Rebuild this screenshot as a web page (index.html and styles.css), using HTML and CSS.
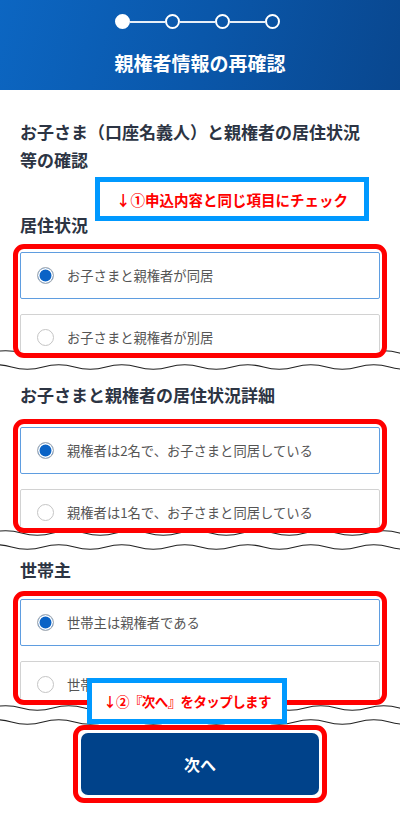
FILE: index.html
```html
<!DOCTYPE html>
<html lang="ja">
<head>
    <meta charset="UTF-8">
    <meta name="viewport" content="width=device-width, initial-scale=1.0">
    <title>親権者情報の再確認</title>
    <link rel="stylesheet" href="styles.css">
</head>
<body>
    <header class="head">
        <ol class="steps">
            <li class="step is-current"></li>
            <li class="step-line"></li>
            <li class="step"></li>
            <li class="step-line"></li>
            <li class="step"></li>
            <li class="step-line"></li>
            <li class="step"></li>
        </ol>
        <h1 class="head-title">親権者情報の再確認</h1>
    </header>

    <main class="content">
        <h2 class="lead">お子さま（口座名義人）と親権者の居住状況<br>等の確認</h2>

        <section class="group group-first">
            <h3 class="group-title">居住状況</h3>
            <div class="mark">
                <label class="option is-checked"><span class="radio"></span>お子さまと親権者が同居</label>
                <label class="option"><span class="radio"></span>お子さまと親権者が別居</label>
            </div>
            <svg class="cut cut-1" viewBox="0 0 400 24" preserveAspectRatio="none">
                <path d="M-10 5 q15.75 -4.5 31.5 0 t31.5 0 t31.5 0 t31.5 0 t31.5 0 t31.5 0 t31.5 0 t31.5 0 t31.5 0 t31.5 0 t31.5 0 t31.5 0 t31.5 0 t31.5 0"/>
                <path d="M-20 19 q15.75 -4.5 31.5 0 t31.5 0 t31.5 0 t31.5 0 t31.5 0 t31.5 0 t31.5 0 t31.5 0 t31.5 0 t31.5 0 t31.5 0 t31.5 0 t31.5 0 t31.5 0"/>
            </svg>
        </section>

        <section class="group group-second">
            <h3 class="group-title">お子さまと親権者の居住状況詳細</h3>
            <div class="mark">
                <label class="option is-checked"><span class="radio"></span>親権者は2名で、お子さまと同居している</label>
                <label class="option"><span class="radio"></span>親権者は1名で、お子さまと同居している</label>
            </div>
            <svg class="cut cut-2" viewBox="0 0 400 24" preserveAspectRatio="none">
                <path d="M-10 5 q15.75 -4.5 31.5 0 t31.5 0 t31.5 0 t31.5 0 t31.5 0 t31.5 0 t31.5 0 t31.5 0 t31.5 0 t31.5 0 t31.5 0 t31.5 0 t31.5 0 t31.5 0"/>
                <path d="M-20 19 q15.75 -4.5 31.5 0 t31.5 0 t31.5 0 t31.5 0 t31.5 0 t31.5 0 t31.5 0 t31.5 0 t31.5 0 t31.5 0 t31.5 0 t31.5 0 t31.5 0 t31.5 0"/>
            </svg>
        </section>

        <section class="group group-third">
            <h3 class="group-title">世帯主</h3>
            <div class="mark">
                <label class="option is-checked"><span class="radio"></span>世帯主は親権者である</label>
                <label class="option"><span class="radio"></span>世帯主は親権者ではない</label>
            </div>
            <svg class="cut cut-3" viewBox="0 0 400 24" preserveAspectRatio="none">
                <path d="M-10 5 q15.75 -4.5 31.5 0 t31.5 0 t31.5 0 t31.5 0 t31.5 0 t31.5 0 t31.5 0 t31.5 0 t31.5 0 t31.5 0 t31.5 0 t31.5 0 t31.5 0 t31.5 0"/>
                <path d="M-20 19 q15.75 -4.5 31.5 0 t31.5 0 t31.5 0 t31.5 0 t31.5 0 t31.5 0 t31.5 0 t31.5 0 t31.5 0 t31.5 0 t31.5 0 t31.5 0 t31.5 0 t31.5 0"/>
            </svg>
        </section>

        <div class="mark-btn">
            <button class="next" type="button">次へ</button>
        </div>
    </main>

    <p class="note note-1">↓①申込内容と同じ項目にチェック</p>
    <p class="note note-2">↓②『次へ』をタップします</p>
</body>
</html>
```

FILE: styles.css
```css
body {
    margin: 0;
    padding: 0;
    font-family: "Noto Sans CJK JP", "Noto Sans", sans-serif;
    background: #fff;
    color: #2c3443;
    position: relative;
    min-height: 838px;
}
.head {
    background: linear-gradient(105deg, #0c66c2 0%, #0a57aa 50%, #09478f 100%);
    padding: 14px 0 13px;
    color: #fff;
}
.steps {
    list-style: none;
    margin: 0;
    padding: 0 6px 0 0;
    display: flex;
    justify-content: center;
    align-items: center;
    height: 15px;
}
.step {
    width: 15px;
    height: 15px;
    box-sizing: border-box;
    border: 2px solid #fff;
    border-radius: 50%;
}
.step.is-current {
    background: #fff;
}
.step-line {
    width: 35px;
    height: 2px;
    background: #fff;
    opacity: 0.9;
}
.head-title {
    margin: 20px 0 0;
    font-size: 19px;
    line-height: 28px;
    font-weight: bold;
    text-align: center;
}
.content {
    padding: 28px 20px 0;
}
.lead {
    margin: 0;
    font-size: 17px;
    line-height: 28px;
    font-weight: bold;
}
.group-title {
    margin: 0;
    font-size: 17px;
    line-height: 28px;
    font-weight: bold;
}
.group-first {
    margin-top: 37px;
}
.group-first .group-title {
    margin-bottom: 5px;
}
.group-second .group-title {
    margin-bottom: 10px;
}
.group-third .group-title {
    margin-bottom: 7px;
}
.mark {
    position: relative;
    z-index: 2;
    margin: 0 -7px;
    height: 114px;
    box-sizing: border-box;
    border: 5px solid #ff0000;
    border-radius: 11px;
    padding: 3px 2px 0;
    overflow: hidden;
    display: flex;
    flex-direction: column;
    gap: 15px;
    background: #fff;
}
.option {
    flex: none;
    height: 47px;
    box-sizing: border-box;
    border: 1px solid #d2d2d2;
    border-radius: 2px;
    display: flex;
    align-items: center;
    gap: 13px;
    padding-left: 16px;
    font-size: 13.3px;
    color: #555;
}
.option.is-checked {
    border-color: #5f9de0;
}
.radio {
    width: 17px;
    height: 17px;
    box-sizing: border-box;
    border: 1px solid #c4c4c4;
    border-radius: 50%;
    background: #fff;
}
.is-checked .radio {
    border-color: #b4b4b4;
    background: #0a63c6;
    box-shadow: inset 0 0 0 1.5px #fff;
}
.cut {
    position: relative;
    z-index: 1;
    display: block;
    width: 400px;
    height: 24px;
    margin: 0 -20px;
}
.cut path {
    fill: none;
    stroke: #222;
    stroke-width: 1.1;
}
.cut-1 {
    margin-top: -10px;
    margin-bottom: 9px;
}
.cut-2 {
    margin-top: -5px;
    margin-bottom: 4px;
}
.cut-3 {
    margin-top: -2px;
    margin-bottom: -2px;
}
.mark-btn {
    position: relative;
    z-index: 2;
    width: 254px;
    margin: 0 auto;
    box-sizing: border-box;
    border: 5px solid #ff0000;
    border-radius: 11px;
    padding: 3px;
    background: #fff;
}
.next {
    display: block;
    width: 100%;
    height: 62px;
    border: none;
    border-radius: 7px;
    background: #00428a;
    color: #fff;
    font-family: inherit;
    font-size: 16px;
    font-weight: bold;
    cursor: pointer;
}
.note {
    position: absolute;
    z-index: 3;
    margin: 0;
    box-sizing: border-box;
    border: 5px solid #0099ff;
    background: #fff;
    color: #ff0000;
    font-weight: bold;
    display: flex;
    align-items: center;
    justify-content: center;
    white-space: nowrap;
}
.note-1 {
    left: 95px;
    top: 177px;
    width: 274px;
    height: 44px;
    font-size: 14.5px;
}
.note-2 {
    left: 87px;
    top: 678px;
    width: 200px;
    height: 46px;
    font-size: 13.5px;
    letter-spacing: -0.6px;
}
```
